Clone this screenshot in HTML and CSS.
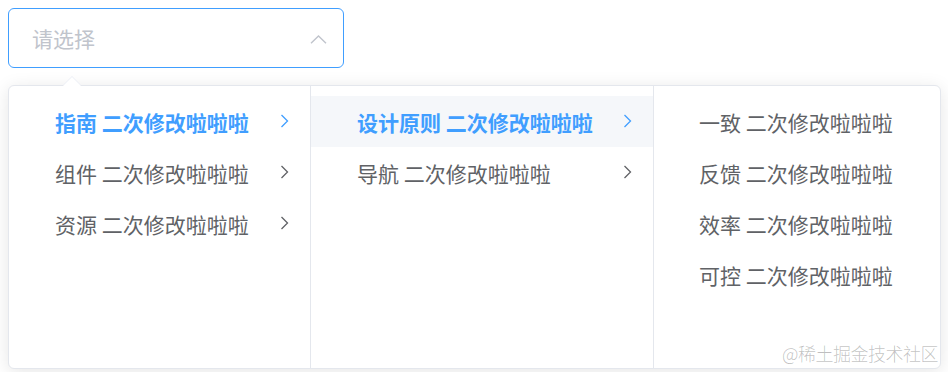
FILE: index.html
```html
<!DOCTYPE html>
<html lang="zh-CN">
<head>
  <meta charset="UTF-8">
  <meta name="viewport" content="width=device-width, initial-scale=1.0">
  <title>Cascader</title>
  <link rel="stylesheet" href="styles.css">
</head>
<body>
  <div class="cascader">
    <div class="cascader-input">
      <span class="placeholder">请选择</span>
      <svg class="input-arrow" width="17" height="9" viewBox="0 0 17 9">
        <polyline points="1,8.3 8.5,1 16,8.3" />
      </svg>
    </div>

    <div class="cascader-panel">
      <span class="popper-arrow"></span>

      <ul class="menu menu-first">
        <li class="menu-item active">指南 二次修改啦啦啦
          <svg class="item-arrow" width="9" height="14" viewBox="0 0 9 14"><polyline points="1.5,1 7.5,7 1.5,13" /></svg>
        </li>
        <li class="menu-item">组件 二次修改啦啦啦
          <svg class="item-arrow" width="9" height="14" viewBox="0 0 9 14"><polyline points="1.5,1 7.5,7 1.5,13" /></svg>
        </li>
        <li class="menu-item">资源 二次修改啦啦啦
          <svg class="item-arrow" width="9" height="14" viewBox="0 0 9 14"><polyline points="1.5,1 7.5,7 1.5,13" /></svg>
        </li>
      </ul>

      <ul class="menu menu-second">
        <li class="menu-item active hover">设计原则 二次修改啦啦啦
          <svg class="item-arrow" width="9" height="14" viewBox="0 0 9 14"><polyline points="1.5,1 7.5,7 1.5,13" /></svg>
        </li>
        <li class="menu-item">导航 二次修改啦啦啦
          <svg class="item-arrow" width="9" height="14" viewBox="0 0 9 14"><polyline points="1.5,1 7.5,7 1.5,13" /></svg>
        </li>
      </ul>

      <ul class="menu menu-last">
        <li class="menu-item">一致 二次修改啦啦啦</li>
        <li class="menu-item">反馈 二次修改啦啦啦</li>
        <li class="menu-item">效率 二次修改啦啦啦</li>
        <li class="menu-item">可控 二次修改啦啦啦</li>
      </ul>

      <span class="watermark">@稀土掘金技术社区</span>
    </div>
  </div>
</body>
</html>
```

FILE: styles.css
```css
body {
  margin: 0;
  background-color: #ffffff;
  font-family: "Noto Sans CJK SC", "Noto Sans", sans-serif;
}

.cascader {
  padding: 8px;
}

.cascader-input {
  box-sizing: border-box;
  width: 336px;
  height: 60px;
  border: 1px solid #409eff;
  border-radius: 6px;
  padding: 0 16px 0 23px;
  display: flex;
  align-items: center;
  justify-content: space-between;
}

.placeholder {
  font-size: 21px;
  color: #c0c4cc;
}

.input-arrow {
  margin-top: 2px;
}

.input-arrow polyline {
  fill: none;
  stroke: #c0c4cc;
  stroke-width: 1.4;
}

.cascader-panel {
  position: relative;
  box-sizing: border-box;
  width: 933px;
  height: 284px;
  margin-top: 17px;
  border: 1px solid #e4e7ed;
  border-radius: 6px;
  background-color: #ffffff;
  box-shadow: 0 3px 18px rgba(0, 0, 0, 0.1);
  display: flex;
}

.popper-arrow {
  position: absolute;
  top: -10px;
  left: 54px;
  width: 0;
  height: 0;
  border: 9px solid transparent;
  border-top-width: 0;
  border-bottom-color: #ebeef5;
}

.popper-arrow::after {
  content: "";
  position: absolute;
  top: 1px;
  left: -9px;
  border: 9px solid transparent;
  border-top-width: 0;
  border-bottom-color: #ffffff;
}

.menu {
  list-style: none;
  margin: 0;
  padding: 10px 0;
  box-sizing: border-box;
  height: 100%;
}

.menu-first {
  width: 302px;
  border-right: 1px solid #e4e7ed;
}

.menu-second {
  width: 343px;
  border-right: 1px solid #e4e7ed;
}

.menu-last {
  flex: 1;
}

.menu-item {
  position: relative;
  height: 51px;
  padding-left: 46px;
  display: flex;
  align-items: center;
  font-size: 21px;
  color: #606266;
  white-space: nowrap;
}

.menu-last .menu-item {
  padding-left: 45px;
}

.menu-item.active {
  color: #409eff;
  font-weight: bold;
}

.menu-item.hover {
  background-color: #f5f7fa;
}

.item-arrow {
  position: absolute;
  right: 21px;
  top: 18px;
}

.item-arrow polyline {
  fill: none;
  stroke: #606266;
  stroke-width: 1.3;
}

.active .item-arrow polyline {
  stroke: #409eff;
}

.watermark {
  position: absolute;
  right: 2px;
  bottom: 2px;
  font-size: 18px;
  font-weight: 300;
  color: rgba(0, 0, 0, 0.25);
  letter-spacing: -0.5px;
}
```
